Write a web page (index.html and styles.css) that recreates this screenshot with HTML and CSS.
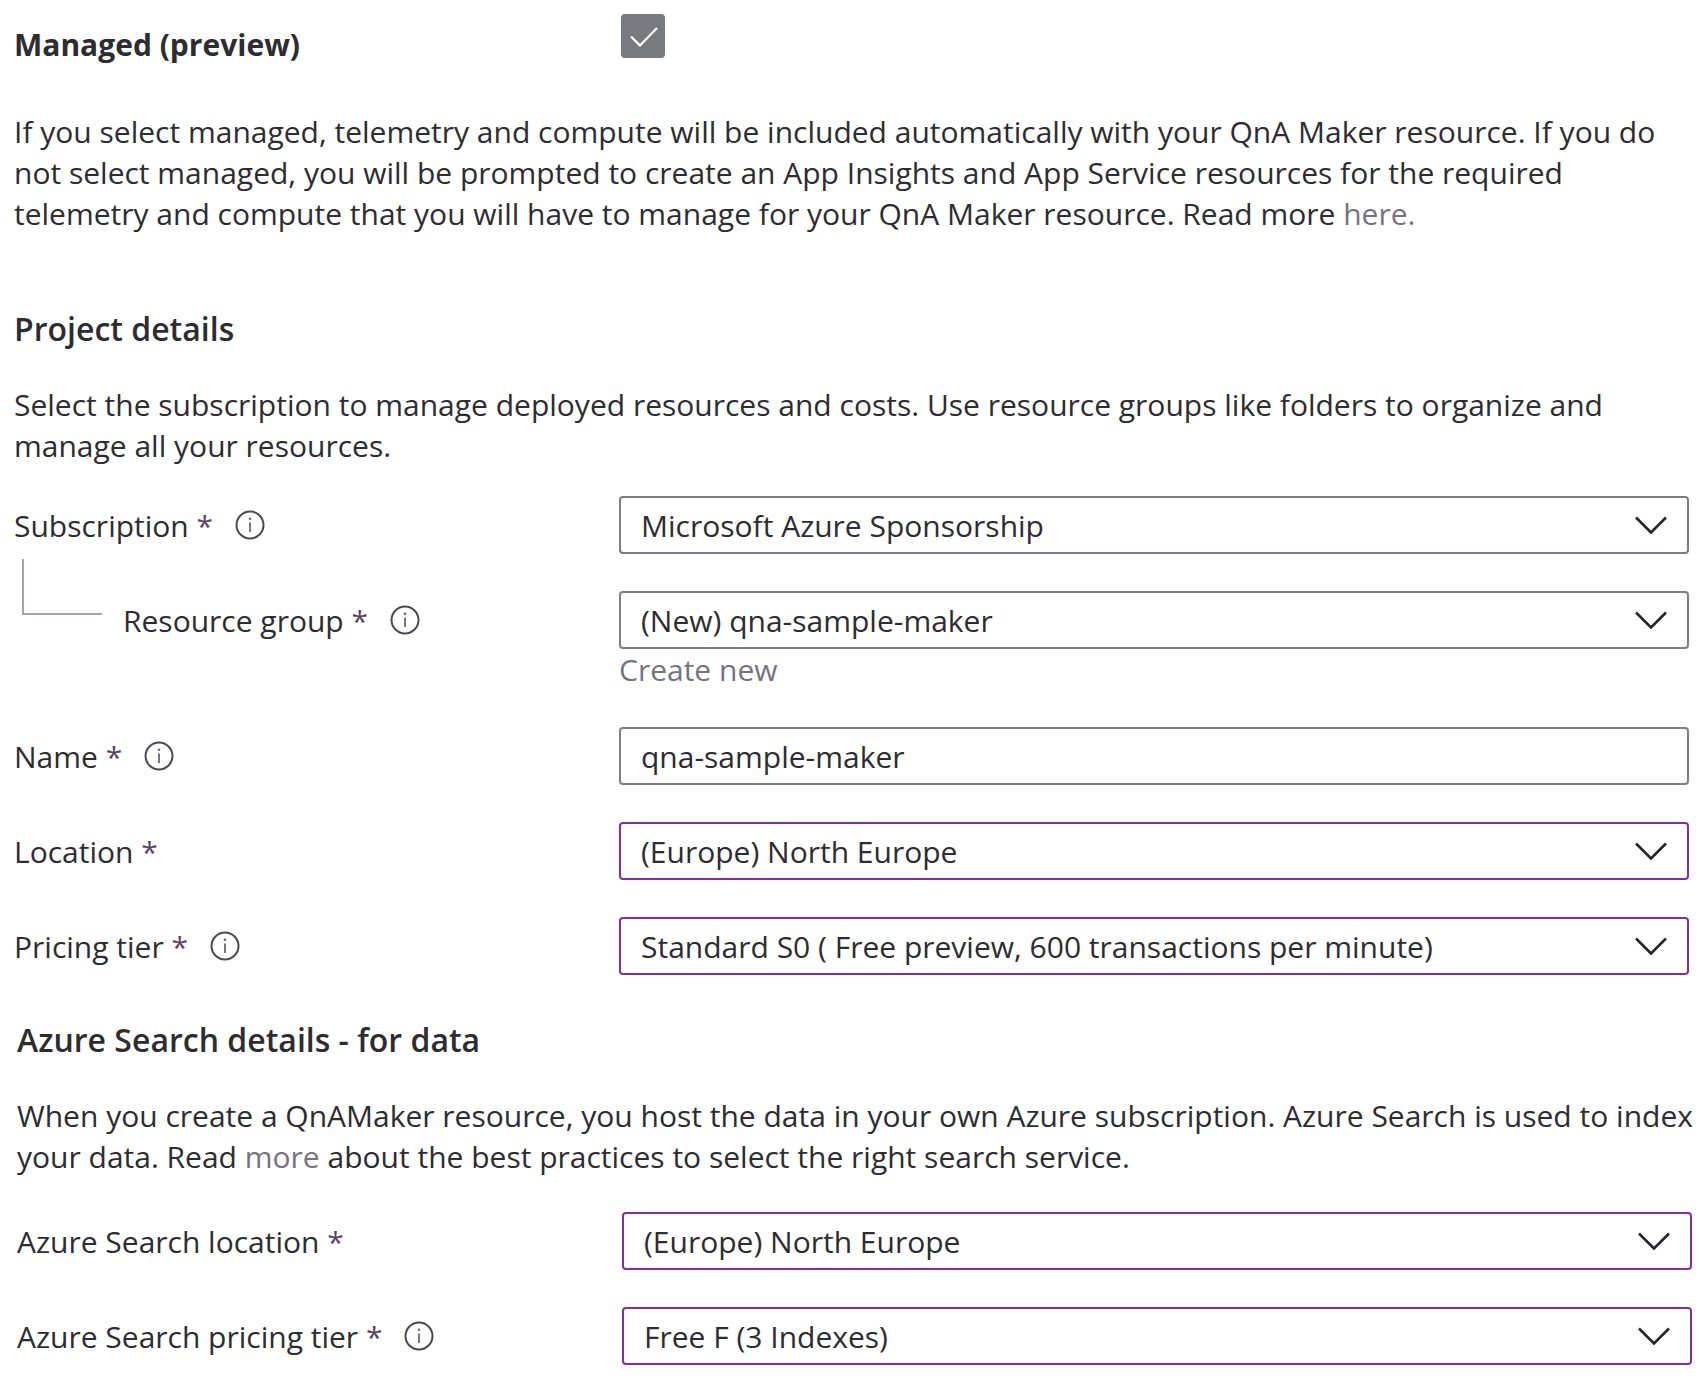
FILE: index.html
```html
<!DOCTYPE html>
<html lang="en">
<head>
<meta charset="utf-8">
<meta name="viewport" content="width=device-width, initial-scale=1">
<title>Create QnA Maker</title>
<link rel="stylesheet" href="styles.css">
</head>
<body>
<svg class="defs" aria-hidden="true">
  <symbol id="chevron" viewBox="0 0 32 18"><path d="M1 1.5 16 16.5 31 1.5" fill="none" stroke="#26252a" stroke-width="2.6"/></symbol>
  <symbol id="info" viewBox="0 0 30 30"><circle cx="15" cy="15" r="13.5" fill="none" stroke="#4c4852" stroke-width="2"/><path d="M15 12.5V22" stroke="#6b6772" stroke-width="1.8"/><circle cx="15" cy="8.8" r="1.3" fill="#6b6772"/></symbol>
</svg>
<main class="form">
  <section class="section">
    <div class="row managed">
      <label class="managed-label" for="managed">Managed (preview)</label>
      <input class="check" type="checkbox" id="managed" checked>
    </div>
    <p class="text">If you select managed, telemetry and compute will be included automatically with your QnA Maker resource. If you do<br>not select managed, you will be prompted to create an App Insights and App Service resources for the required<br>telemetry and compute that you will have to manage for your QnA Maker resource. Read more <a href="#">here.</a></p>
  </section>

  <section class="section">
    <h2 class="title">Project details</h2>
    <p class="text">Select the subscription to manage deployed resources and costs. Use resource groups like folders to organize and<br>manage all your resources.</p>
    <div class="fields">
      <div class="row">
        <div class="label"><label for="subscription">Subscription <span class="star">*</span></label><svg class="info"><use href="#info"/></svg></div>
        <div class="picker"><select class="control" id="subscription"><option>Microsoft Azure Sponsorship</option></select><svg class="chevron"><use href="#chevron"/></svg></div>
      </div>
      <div class="row">
        <div class="label"><span class="branch"></span><label for="group">Resource group <span class="star">*</span></label><svg class="info"><use href="#info"/></svg></div>
        <div class="picker"><select class="control" id="group"><option>(New) qna-sample-maker</option></select><svg class="chevron"><use href="#chevron"/></svg></div>
        <a class="create" href="#">Create new</a>
      </div>
      <div class="row">
        <div class="label"><label for="name">Name <span class="star">*</span></label><svg class="info"><use href="#info"/></svg></div>
        <input class="control" type="text" id="name" value="qna-sample-maker">
      </div>
      <div class="row">
        <div class="label"><label for="location">Location <span class="star">*</span></label></div>
        <div class="picker"><select class="control edited" id="location"><option>(Europe) North Europe</option></select><svg class="chevron"><use href="#chevron"/></svg></div>
      </div>
      <div class="row">
        <div class="label"><label for="tier">Pricing tier <span class="star">*</span></label><svg class="info"><use href="#info"/></svg></div>
        <div class="picker"><select class="control edited" id="tier"><option>Standard S0 ( Free preview, 600 transactions per minute)</option></select><svg class="chevron"><use href="#chevron"/></svg></div>
      </div>
    </div>
  </section>

  <section class="section search">
    <h2 class="title">Azure Search details - for data</h2>
    <p class="text">When you create a QnAMaker resource, you host the data in your own Azure subscription. Azure Search is used to index<br>your data. Read <a href="#">more</a> about the best practices to select the right search service.</p>
    <div class="fields">
      <div class="row">
        <div class="label"><label for="search-location">Azure Search location <span class="star">*</span></label></div>
        <div class="picker"><select class="control edited" id="search-location"><option>(Europe) North Europe</option></select><svg class="chevron"><use href="#chevron"/></svg></div>
      </div>
      <div class="row">
        <div class="label"><label for="search-tier">Azure Search pricing tier <span class="star">*</span></label><svg class="info"><use href="#info"/></svg></div>
        <div class="picker"><select class="control edited" id="search-tier"><option>Free F (3 Indexes)</option></select><svg class="chevron"><use href="#chevron"/></svg></div>
      </div>
    </div>
  </section>
</main>
</body>
</html>
```
FILE: styles.css
```css
* { box-sizing: border-box; }

body {
  margin: 0;
  background: #fff;
  color: #2d2c30;
  font-family: "Open Sans", "Noto Sans", sans-serif;
  font-size: 30px;
  line-height: 41px;
}

.defs { display: none; }

a { color: #77727f; text-decoration: none; }

.form { padding: 14px 18px 14px 14px; }

.row {
  display: grid;
  grid-template-columns: 605px 1fr;
  align-items: center;
}

.managed { align-items: start; }

.managed-label {
  padding-top: 10px;
  font-weight: 700;
}

.check {
  appearance: none;
  width: 44px;
  height: 44px;
  margin: 0 2px;
  border-radius: 4px;
  background: #777b80 url("data:image/svg+xml,%3Csvg xmlns='http://www.w3.org/2000/svg' viewBox='0 0 44 44'%3E%3Cpath d='M10 22.5 19 31.5 36 14' fill='none' stroke='white' stroke-width='2.2'/%3E%3C/svg%3E") center / 44px;
}

.text { margin: 46px 0 0; }

@media (min-width: 1700px) {
  .text { white-space: nowrap; }
}

.title {
  margin: 74px 0 0;
  font-size: 32px;
  line-height: 42px;
  font-weight: 600;
}

.title + .text { margin-top: 34px; }

.fields {
  display: flex;
  flex-direction: column;
  gap: 37px;
  margin-top: 30px;
}

.label { display: flex; align-items: center; }

.star { color: #58445f; }

.info { width: 30px; height: 30px; margin-left: 22px; }

.branch {
  width: 80px;
  height: 56px;
  margin: -66px 21px 0 8px;
  border: solid #a9a2ae;
  border-width: 0 0 2px 2px;
}

.picker { display: grid; align-items: center; }

.control {
  width: 100%;
  height: 58px;
  padding: 0 20px;
  border: 2px solid #7d7b87;
  border-radius: 4px;
  background: #fff;
  color: inherit;
  font: inherit;
  appearance: none;
}

.picker .control { grid-area: 1 / 1; }

.edited { border-color: #862c9e; }

.chevron {
  grid-area: 1 / 1;
  justify-self: end;
  width: 32px;
  height: 18px;
  margin-right: 22px;
  pointer-events: none;
}

.create { grid-column: 2; }

.search { margin: 0 -3px 0 3px; }
.search .title { margin-top: 44px; }
.search .fields { margin-top: 35px; }
```
